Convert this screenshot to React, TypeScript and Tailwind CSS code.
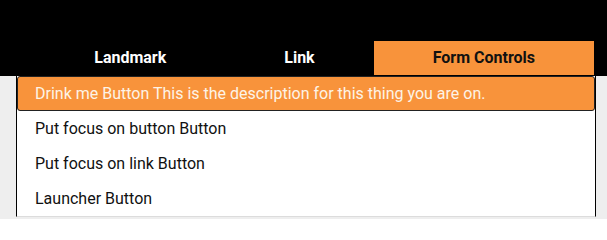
const tabs = ["Landmark", "Link", "Form Controls"];
const active = "Form Controls";

const items = [
  "Drink me Button This is the description for this thing you are on.",
  "Put focus on button Button",
  "Put focus on link Button",
  "Launcher Button",
];

export default function App() {
  return (
    <main className="h-[219px] w-full overflow-hidden bg-[#eeeeee] font-['Roboto',sans-serif]">
      <nav className="flex h-[76px] items-end justify-end bg-black pb-[1px] pr-[13px]">
        {tabs.map((tab) => (
          <div
            key={tab}
            className={
              tab === active
                ? "flex h-[34px] items-center bg-[#f8933b] px-[59px] text-[16px] font-bold text-[#111]"
                : "flex h-[34px] items-center px-[59px] text-[16px] font-bold text-white"
            }
          >
            {tab}
          </div>
        ))}
      </nav>

      <ul className="ml-[16px] w-[580px] border-x border-b border-x-black border-b-[#dcdcdc] bg-white">
        {items.map((item, index) =>
          index === 0 ? (
            <li
              key={item}
              className="flex h-[35px] items-center rounded-[3px] border border-[#222] bg-[#f8933b] pl-[17px] text-[16px] text-[#fdf3e7]"
            >
              {item}
            </li>
          ) : (
            <li key={item} className="flex h-[35px] items-center pl-[18px] text-[16px] text-[#111]">
              {item}
            </li>
          ),
        )}
      </ul>
    </main>
  );
}
